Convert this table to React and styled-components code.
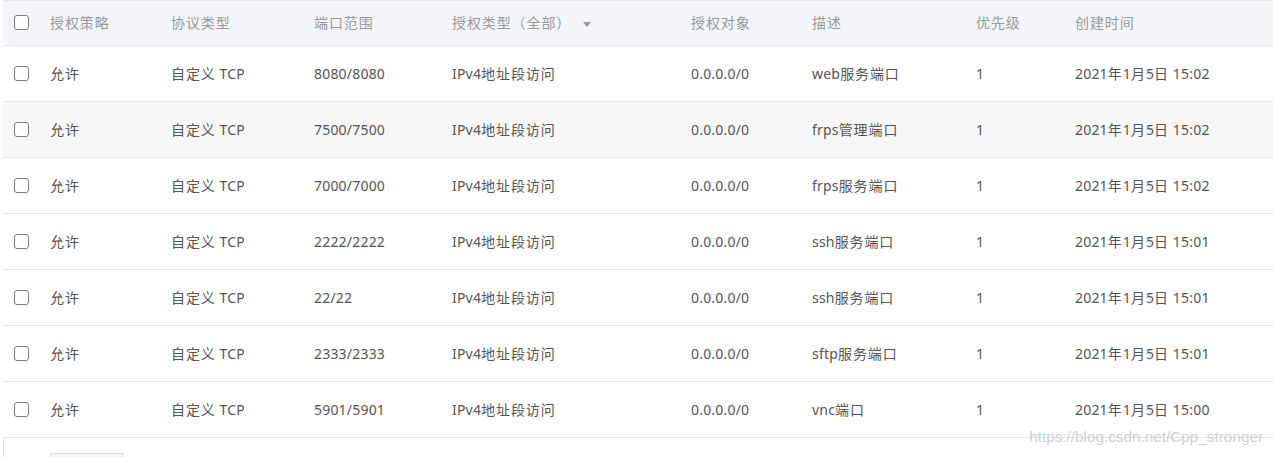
import React from 'react';
import styled, { createGlobalStyle } from 'styled-components';

const GlobalStyle = createGlobalStyle`
  html, body {
    margin: 0;
    padding: 0;
    background: #ffffff;
    overflow: hidden;
  }
  body {
    font-family: "Noto Sans", "Noto Sans CJK SC", sans-serif;
  }
`;

const COLS = '47px 121px 143px 138px 239px 121px 164px 99px 1fr';

const Page = styled.div`
  position: relative;
  padding-left: 3px;
  height: 457px;
  overflow: hidden;
`;

const Table = styled.div`
  border-left: 1px solid #e3e5e8;
  border-top: 1px solid #e3e6eb;
  height: 100%;
`;

const Row = styled.div`
  display: grid;
  grid-template-columns: ${COLS};
  align-items: center;
  height: ${p => (p.$head ? 44 : 55)}px;
  background: ${p => (p.$head ? '#f3f5f8' : p.$hover ? '#f7f7f7' : '#ffffff')};
  border-bottom: 1px solid ${p => (p.$head ? '#e1e4e8' : '#e5e5e5')};
  margin-left: -1px;
`;

const Cell = styled.div`
  font-size: 14px;
  line-height: 20px;
  color: ${p => (p.$head ? '#9a9a9a' : '#555555')};
  white-space: pre;
  letter-spacing: 0.2px;
`;

// CJK glyphs in the reference are a touch wider than the latin ones
const Han = styled.span`
  letter-spacing: 0.9px;
`;

const CheckCell = styled.div`
  display: flex;
  align-items: center;
  padding-left: 11px;
`;

const Box = styled.span`
  width: 13px;
  height: 13px;
  border: 1.5px solid #7d7d7d;
  border-radius: 3px;
  background: #fff;
  box-sizing: content-box;
  margin-top: -1px;
`;

const Caret = styled.span`
  display: inline-block;
  vertical-align: middle;
  width: 0;
  height: 0;
  margin-left: 12px;
  border-left: 4px solid transparent;
  border-right: 4px solid transparent;
  border-top: 5px solid #999;
`;

const Footer = styled.div`
  padding: 15px 0 0 46px;
`;

const PageBox = styled.div`
  width: 71px;
  height: 26px;
  border: 1px solid #dcdcdc;
  background: #f6f6f6;
`;

const Watermark = styled.div`
  position: absolute;
  right: 10px;
  top: 428px;
  font-family: "Liberation Sans", Arial, sans-serif;
  font-size: 15.3px;
  color: rgba(196, 196, 196, 0.8);
`;

const CJK = /[\u3000-\u9fff\uff00-\uffef]/;

const mix = text =>
  text.split(/([\u3000-\u9fff\uff00-\uffef]+)/).map((part, i) =>
    CJK.test(part) ? <Han key={i}>{part}</Han> : part
  );

const heads = ['授权策略', '协议类型', '端口范围', '授权类型（全部）', '授权对象', '描述', '优先级', '创建时间'];

const rows = [
  ['8080/8080', 'web服务端口', '15:02'],
  ['7500/7500', 'frps管理端口', '15:02'],
  ['7000/7000', 'frps服务端口', '15:02'],
  ['2222/2222', 'ssh服务端口', '15:01'],
  ['22/22', 'ssh服务端口', '15:01'],
  ['2333/2333', 'sftp服务端口', '15:01'],
  ['5901/5901', 'vnc端口', '15:00'],
];

export default function App() {
  return (
    <Page>
      <GlobalStyle />
      <Table>
        <Row $head>
          <CheckCell><Box /></CheckCell>
          {heads.map((h, i) => (
            <Cell $head key={h}>
              {mix(h)}
              {i === 3 && <Caret />}
            </Cell>
          ))}
        </Row>
        {rows.map(([port, desc, time], i) => (
          <Row key={i} $hover={i === 1}>
            <CheckCell><Box /></CheckCell>
            <Cell>{mix('允许')}</Cell>
            <Cell>{mix('自定义 TCP')}</Cell>
            <Cell>{port}</Cell>
            <Cell>{mix('IPv4地址段访问')}</Cell>
            <Cell>0.0.0.0/0</Cell>
            <Cell>{mix(desc)}</Cell>
            <Cell>1</Cell>
            <Cell>{mix(`2021年1月5日 ${time}`)}</Cell>
          </Row>
        ))}
        <Footer>
          <PageBox />
        </Footer>
      </Table>
      <Watermark>https://blog.csdn.net/Cpp_stronger</Watermark>
    </Page>
  );
}
